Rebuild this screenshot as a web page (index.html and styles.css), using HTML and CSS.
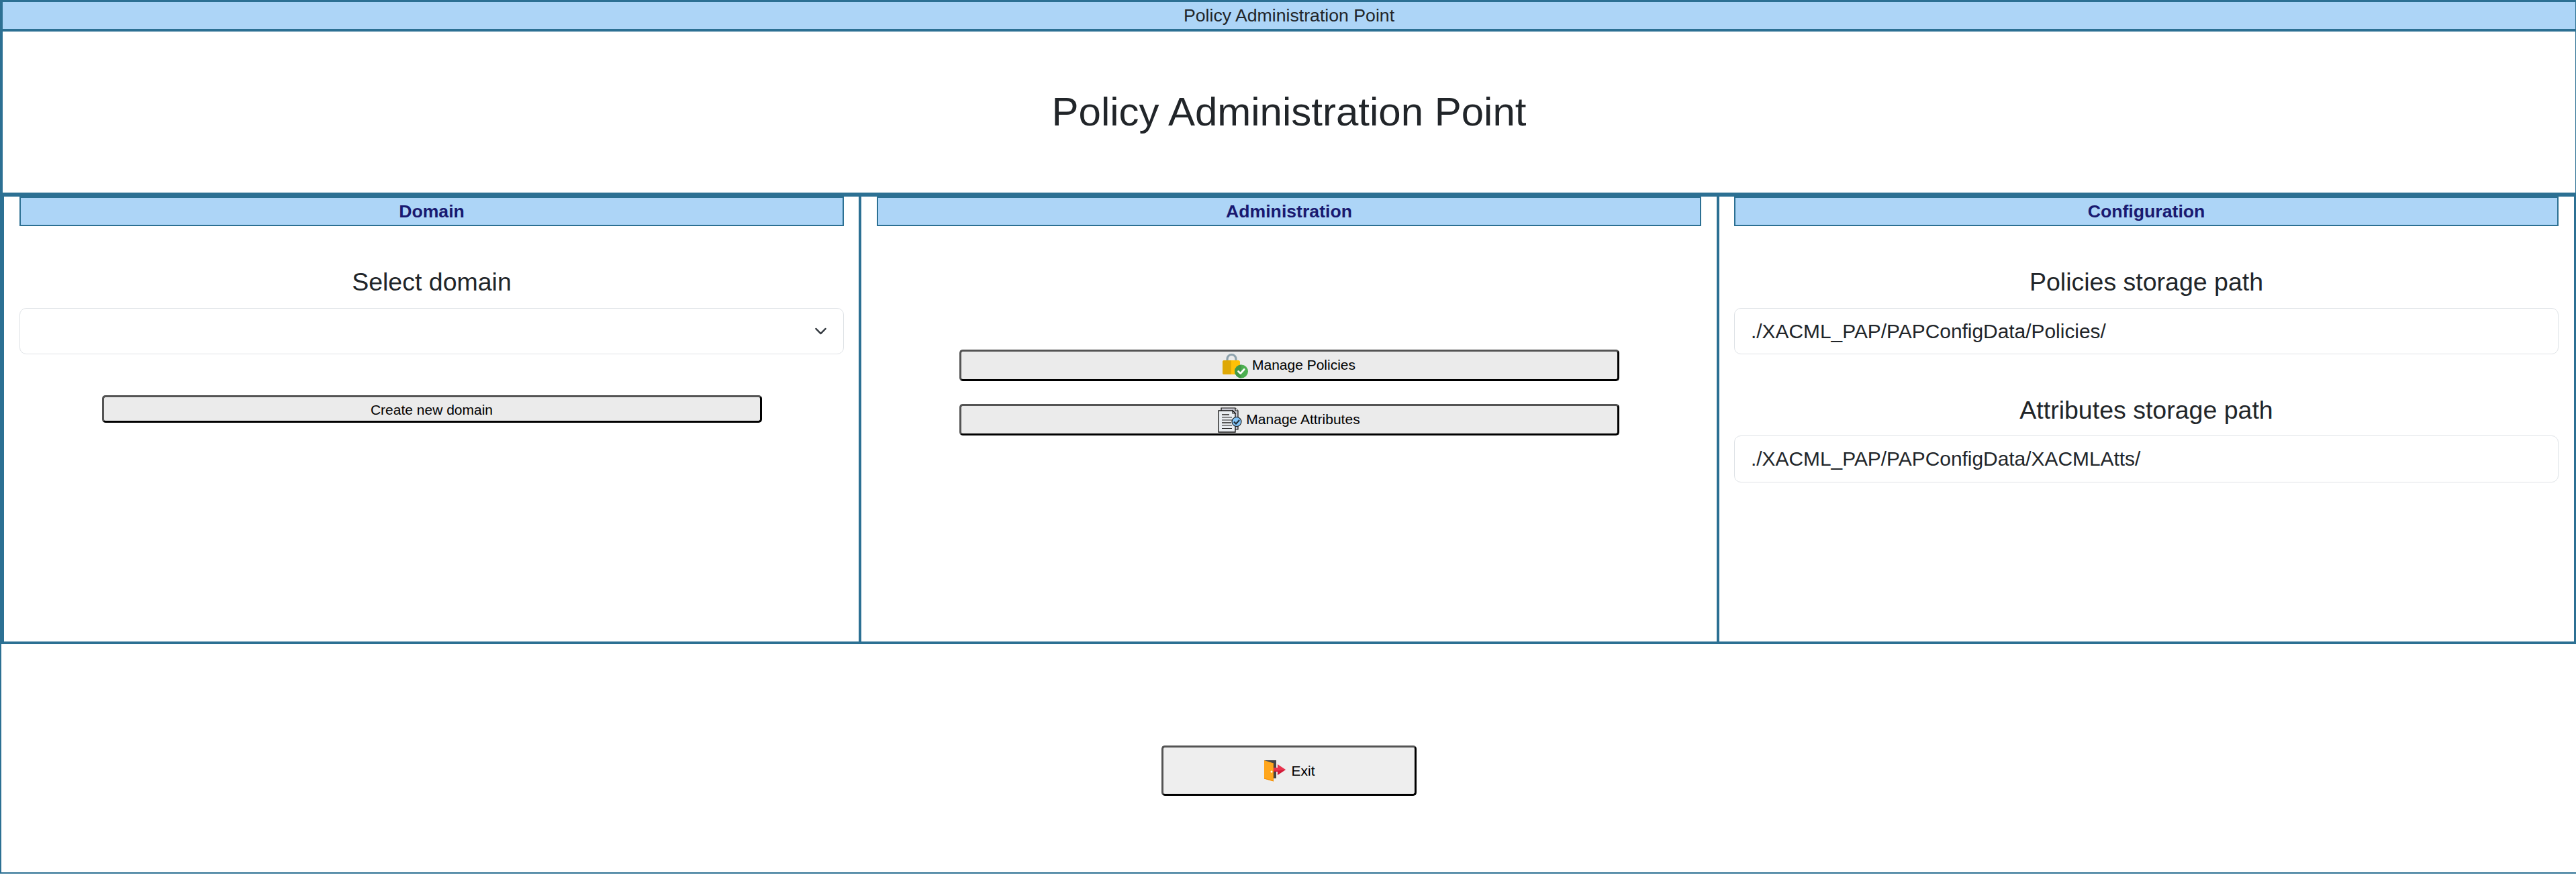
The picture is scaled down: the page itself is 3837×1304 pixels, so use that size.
FILE: index.html
```html
<!DOCTYPE html>
<html lang="en">
<head>
<meta charset="utf-8">
<title>Policy Administration Point</title>
<link rel="stylesheet" href="styles.css">
</head>
<body>
<div class="page">
  <header class="topbar">Policy Administration Point</header>
  <section class="hero"><h1>Policy Administration Point</h1></section>
  <main class="columns">
    <section class="column">
      <h2 class="column-title">Domain</h2>
      <label class="field-label">Select domain</label>
      <div class="field select">
        <svg class="chevron" viewBox="0 0 16 16"><path d="m2 5 6 6 6-6" fill="none" stroke="#343a40" stroke-width="2" stroke-linecap="round" stroke-linejoin="round"/></svg>
      </div>
      <button class="btn btn-create">Create new domain</button>
    </section>
    <section class="column">
      <h2 class="column-title">Administration</h2>
      <div class="actions">
        <button class="btn btn-manage">
          <svg class="icon-lock" viewBox="0 0 38 38">
            <path d="M7 13V9a6.5 6.5 0 0 1 13 0v4" fill="none" stroke="#8fa3ad" stroke-width="3.2"/>
            <rect y="11" width="26" height="21" rx="2.5" fill="#ffc107"/>
            <path d="M2.5 11H13v21H2.5A2.500 2.500 0 0 1 0 29.500v-16A2.500 2.500 0 0 1 2.500 11z" fill="#dea806"/>
            <circle cx="28" cy="27.500" r="10" fill="#4caf50"/>
            <path d="M28 17.500a10 10 0 0 0 0 20z" fill="#429846"/>
            <path d="m23.500 27.500 3.200 3 5.500-6" fill="none" stroke="#fff" stroke-width="2.700" stroke-linecap="round" stroke-linejoin="round"/>
          </svg>
          <span>Manage Policies</span>
        </button>
        <button class="btn btn-manage">
          <svg class="icon-docs" viewBox="0 0 36 38">
            <path d="M5 1h21l4 4v28H5z" fill="#c9c9d2" stroke="#111" stroke-width="1.200"/>
            <path d="M26 1v4h4" fill="#fff" stroke="#111" stroke-width="1.200"/>
            <path d="M1 5h21l4 4v28H1z" fill="#e9edf1" stroke="#111" stroke-width="1.300"/>
            <path d="M22 5v4h4z" fill="#fff" stroke="#111" stroke-width="1.200"/>
            <path d="M6 11h11M6 23h14" stroke="#555" stroke-width="1.800"/>
            <path d="M6 15h15M6 19h15M6 27h15M6 31.500h15" stroke="#222" stroke-width="1.200"/>
            <circle cx="28" cy="21.500" r="7" fill="#82c4f8" stroke="#111" stroke-width="1.100"/>
            <path d="m24 21.500 3 3 5-5.500" fill="none" stroke="#111" stroke-width="2.200"/>
            <path d="m24.500 21.500 2.500 2.400 4.500-4.900" fill="none" stroke="#5aa8e0" stroke-width=".6"/>
          </svg>
          <span>Manage Attributes</span>
        </button>
      </div>
    </section>
    <section class="column">
      <h2 class="column-title">Configuration</h2>
      <label class="field-label">Policies storage path</label>
      <div class="field">./XACML_PAP/PAPConfigData/Policies/</div>
      <label class="field-label second">Attributes storage path</label>
      <div class="field tall">./XACML_PAP/PAPConfigData/XACMLAtts/</div>
    </section>
  </main>
  <footer class="footer">
    <button class="btn btn-exit">
      <svg class="icon-exit" viewBox="0 0 32 32">
        <path d="M0 0h18v27H0z" fill="#464646"/>
        <path d="M13.500 11H20V6l12 8-12 8v-5h-6.500z" fill="#e8344e"/>
        <path d="m32 14-12 8v-5h-6.500v-1.500H22z" fill="#d11a38"/>
        <path d="m0 0 14 4.500v27L0 27.500z" fill="#ffa61c"/>
        <path d="m0 26.500 14 4v1L0 27.500zM13.300 4.300l.7.200v27l-.7-.2z" fill="#f08a00"/>
        <circle cx="11" cy="17" r="1.500" fill="#fff"/>
      </svg>
      <span>Exit</span>
    </button>
  </footer>
</div>
</body>
</html>
```

FILE: styles.css
```css
* {
  box-sizing: border-box;
}

body {
  margin: 0;
  background: #fff;
  color: #212529;
  font-family: "Liberation Sans", Arial, sans-serif;
  font-size: 26.667px;
}

.page {
  width: 3837px;
  height: 1302px;
  border: 2px solid #2c7093;
  border-width: 0 0 2px;
}

.topbar {
  height: 47px;
  border: solid #2c7093;
  border-width: 3px 1px 4px 4px;
  background: #add5f7;
  line-height: 40px;
  text-align: center;
}

.hero {
  display: flex;
  align-items: center;
  justify-content: center;
  height: 240px;
  border: solid #2c7093;
  border-width: 0 1px 0 4px;
}

.hero h1 {
  margin: 0;
  font-size: 60px;
  font-weight: 400;
  line-height: 72px;
}

.columns {
  display: grid;
  grid-template-columns: 1277px 1278px 1273px;
  height: 673px;
  border: solid #2c7093;
  border-width: 6px 3px 4px 6px;
}

.column {
  padding: 0 22px 0 23px;
  border-right: 4px solid #2c7093;
}

.column:nth-child(2) {
  padding-right: 23px;
}

.column:last-child {
  padding-right: 23px;
  padding-left: 22px;
  border-right: 0;
}

.column-title {
  height: 44px;
  margin: 0;
  border: 2px solid #2c7093;
  background: #add5f7;
  color: #191970;
  font-size: 26.667px;
  line-height: 40px;
  text-align: center;
}

.field-label {
  display: block;
  margin-top: 61px;
  margin-bottom: 16px;
  font-size: 37.5px;
  line-height: 45px;
  text-align: center;
}

.field-label.second {
  margin-bottom: 15px;
}

.field {
  height: 69px;
  padding: 0 24px;
  border: 1px solid #dee2e6;
  border-radius: 10px;
  font-size: 29.9px;
  line-height: 67px;
}

.field.tall {
  height: 70px;
  line-height: 68px;
}

.select {
  display: flex;
  align-items: center;
  justify-content: flex-end;
}

.chevron {
  width: 19px;
  height: 19px;
}

.btn {
  display: flex;
  align-items: center;
  justify-content: center;
  padding: 0;
  border: 3px solid;
  border-color: #545454 #000 #000 #545454;
  border-radius: 5px;
  background: #ebebeb;
  color: #000;
  font-family: inherit;
  font-size: 21px;
}

.btn-create {
  width: 983px;
  height: 41px;
  margin: 61px auto 0;
  padding-top: 2px;
}

.actions {
  display: grid;
  justify-content: center;
  gap: 34px;
  margin-top: 184px;
}

.btn-manage {
  width: 983px;
  height: 47px;
  gap: 6px;
}

.btn-manage span {
  padding-bottom: 2px;
}

.icon-lock {
  width: 38px;
  height: 38px;
}

.icon-docs {
  width: 36px;
  height: 38px;
}

.footer {
  display: flex;
  justify-content: center;
  height: 340px;
  padding-top: 151px;
  border-left: 2px solid #2c7093;
}

.btn-exit {
  width: 380px;
  height: 75px;
  gap: 8px;
  padding-left: 3px;
  background: #eee;
}

.icon-exit {
  width: 32px;
  height: 32px;
}
```
